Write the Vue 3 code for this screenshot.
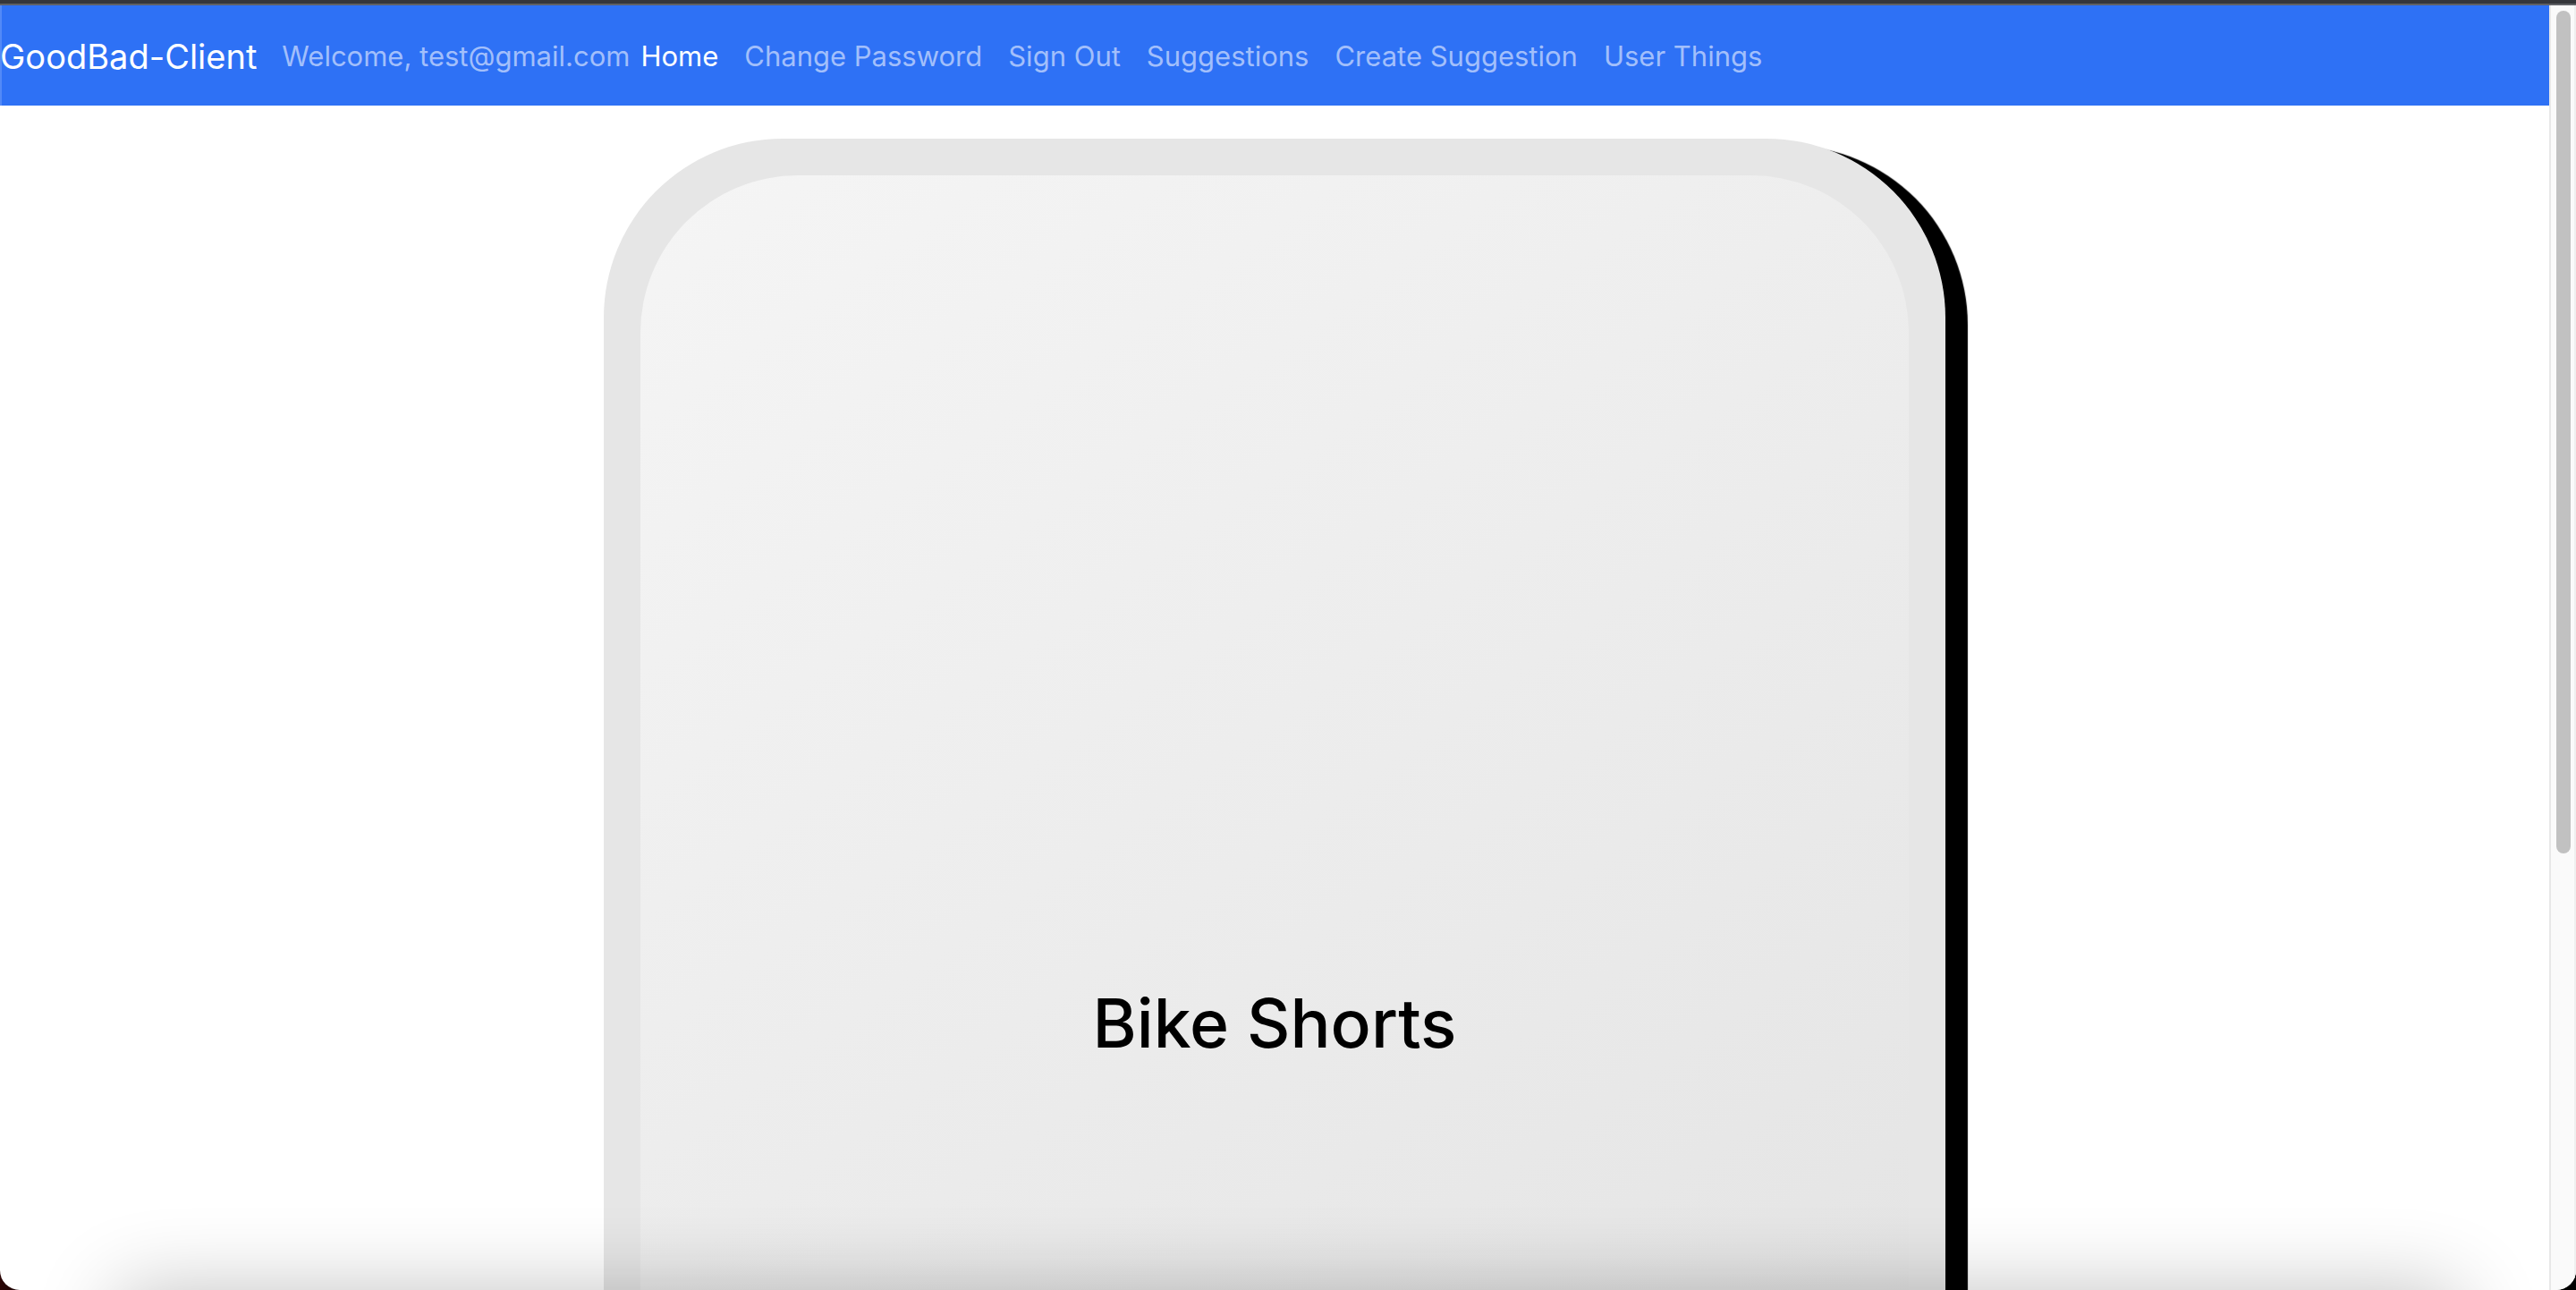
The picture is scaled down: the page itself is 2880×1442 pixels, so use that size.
<script setup>
const links = [
  { label: 'Home', active: true },
  { label: 'Change Password' },
  { label: 'Sign Out' },
  { label: 'Suggestions' },
  { label: 'Create Suggestion' },
  { label: 'User Things' },
]
</script>

<template>
  <div class="window">
    <div class="chrome"></div>
    <div class="viewport">
      <div class="page">
        <nav class="navbar">
          <a class="brand" href="#">GoodBad-Client</a>
          <span class="welcome">Welcome, test@gmail.com</span>
          <div class="links">
            <a
              v-for="link in links"
              :key="link.label"
              class="link"
              :class="{ active: link.active }"
              href="#"
            >{{ link.label }}</a>
          </div>
        </nav>
        <main class="content">
          <article class="card">
            <div class="face">
              <h1 class="title">Bike Shorts</h1>
            </div>
          </article>
        </main>
      </div>
      <div class="scrollbar">
        <div class="thumb"></div>
      </div>
    </div>
    <div class="shade"></div>
  </div>
</template>

<style>
body {
  margin: 0;
  background: linear-gradient(90deg, #2a0606, #000 2%);
}
</style>

<style scoped>
.window {
  position: relative;
  display: flex;
  flex-direction: column;
  height: 100vh;
  overflow: hidden;
  border-radius: 0 0 22px 22px;
  background: #fff;
  font-family: Inter, "Liberation Sans", sans-serif;
}

.chrome {
  flex: none;
  height: 4px;
  background: #35363a;
  border-bottom: 2px solid #5f6166;
}

.viewport {
  flex: 1;
  min-height: 0;
  display: flex;
}

.page {
  flex: 1;
  min-width: 0;
  overflow: hidden;
}

.navbar {
  box-sizing: border-box;
  display: flex;
  align-items: center;
  height: 112px;
  padding-top: 2px;
  box-shadow: inset 2px 0 #5289f7;
  background: #2e71f5;
  color: #a2bffb;
  font-size: 31px;
  line-height: 48px;
  white-space: nowrap;
}

.brand {
  margin-right: 28px;
  color: #fff;
  font-size: 38px;
  text-decoration: none;
}

.welcome {
  margin-right: 12px;
}

.links {
  display: flex;
  gap: 29px;
}

.link {
  color: inherit;
  text-decoration: none;
}

.link.active {
  color: #fff;
}

.content {
  display: flex;
  justify-content: center;
  padding-top: 37px;
}

.card {
  box-sizing: border-box;
  flex: none;
  width: 1500px;
  height: 1978px;
  padding: 41px;
  border-radius: 200px;
  background: #e6e6e6;
  box-shadow: 25px 8px 1px #000;
}

.face {
  display: flex;
  align-items: center;
  justify-content: center;
  height: 100%;
  border-radius: 176px;
  background: linear-gradient(145deg, #f5f5f5, #e0e0e0);
}

.title {
  margin: 0;
  color: #000;
  font-size: 75px;
  font-weight: 500;
  line-height: 96px;
}

.scrollbar {
  box-sizing: border-box;
  flex: none;
  width: 30px;
  padding: 6px 6px 2px;
  border-left: 2px solid #e8e8e8;
  border-right: 2px solid #efefef;
  background: #fafafa;
}

.thumb {
  width: 16px;
  height: 66%;
  border-radius: 8px;
  background: #c1c1c1;
}

.shade {
  position: absolute;
  top: 100%;
  left: 130px;
  right: 130px;
  height: 200px;
  border-radius: 20px;
  box-shadow: 0 0 92px rgba(0, 0, 0, 0.24);
}
</style>
